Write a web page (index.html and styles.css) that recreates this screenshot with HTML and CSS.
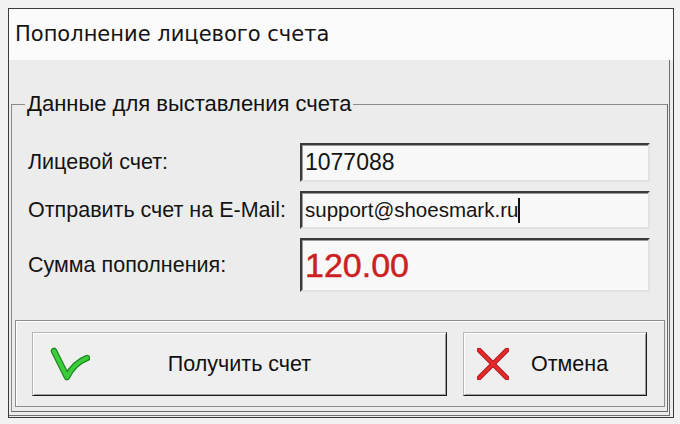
FILE: index.html
```html
<!DOCTYPE html>
<html lang="ru">
<head>
<meta charset="utf-8">
<link rel="stylesheet" href="styles.css">
</head>
<body>
<div class="window">
  <div class="titlebar">Пополнение лицевого счета</div>
  <div class="body">
    <fieldset class="group">
      <legend class="legend">Данные для выставления счета</legend>
      <div class="rows">
        <div class="row">
          <span class="label">Лицевой счет:</span>
          <div class="field f1"><span class="val num">1077088</span></div>
        </div>
        <div class="row">
          <span class="label">Отправить счет на E-Mail:</span>
          <div class="field f2"><span class="val">support@shoesmark.ru</span><span class="caret"></span></div>
        </div>
        <div class="row">
          <span class="label">Сумма пополнения:</span>
          <div class="field f3"><span class="sum">120.00</span></div>
        </div>
      </div>
      <div class="panel">
        <div class="btn btn-ok">
          <svg class="ico-check" width="40" height="34" viewBox="0 0 40 34">
            <path d="M4 4 L17 30 Q24 16 37 11" fill="none" stroke="#1e8a1e" stroke-width="6.5" stroke-linecap="round" stroke-linejoin="round"/>
            <path d="M4 4 L17 30 Q24 16 37 11" fill="none" stroke="#3ccc3c" stroke-width="4" stroke-linecap="round" stroke-linejoin="round"/>
          </svg>
          <span class="btn-text">Получить счет</span>
          <span></span>
        </div>
        <div class="btn btn-cancel">
          <svg class="ico-x" width="32" height="32" viewBox="0 0 32 32">
            <path d="M2 2 L30 30 M30 2 L2 30" fill="none" stroke="#b01818" stroke-width="5" stroke-linecap="round"/>
            <path d="M2 2 L30 30 M30 2 L2 30" fill="none" stroke="#e8282d" stroke-width="3" stroke-linecap="round"/>
          </svg>
          <span class="btn-text">Отмена</span>
        </div>
      </div>
    </fieldset>
  </div>
</div>
</body>
</html>
```

FILE: styles.css
```css
* { box-sizing: border-box; }
html, body { margin: 0; }
body {
  width: 680px;
  height: 424px;
  background: #f2f2f2;
  padding: 8px 6px 6px 8px;
  font-family: "Liberation Sans", Arial, sans-serif;
  color: #111;
  overflow: hidden;
}
.window {
  width: 666px;
  height: 410px;
  border: 1px solid #3c3c3c;
  background: #ececec;
  display: flex;
  flex-direction: column;
}
.titlebar {
  height: 51px;
  flex: none;
  background: #fbfbfb;
  font-family: "DejaVu Sans", sans-serif;
  font-size: 21px;
  line-height: 51px;
  padding-left: 6px;
  color: #141414;
}
.body {
  flex: 1;
  display: flex;
  padding: 32px 1px 0 2px;
  margin: 0 3px 3px 0;
  border-right: 1px solid #6e6e6e;
  border-bottom: 1px solid #6e6e6e;
}
.group {
  flex: 1;
  margin: 0 0 3px 0;
  padding: 0;
  border: 1px solid #8a8a8a;
  border-right-color: #6a6a6a;
  border-bottom-color: #6a6a6a;
  display: flex;
  flex-direction: column;
  min-width: 0;
}
.legend {
  margin-left: 13px;
  padding: 0 2px;
  font-size: 22px;
  line-height: 24px;
  color: #111;
}
.rows {
  display: flex;
  flex-direction: column;
  gap: 9px;
  padding: 27px 17px 0 16px;
}
.row {
  display: flex;
  align-items: center;
  justify-content: space-between;
}
.label {
  font-size: 21.5px;
  color: #141414;
}
.field {
  width: 350px;
  background: #f8f8f8;
  border: 2px solid;
  border-color: #3a3a3a #e2e2e2 #e2e2e2 #3a3a3a;
  box-shadow: inset 1px 1px 0 #9a9a9a;
  display: flex;
  align-items: center;
  padding-left: 3px;
}
.f1 { height: 39px; }
.f2 { height: 38px; }
.f3 { height: 54px; }
.val {
  font-size: 20.5px;
  color: #141414;
}
.num { font-size: 23px; }
.caret {
  display: inline-block;
  width: 2px;
  height: 25px;
  background: #111;
}
.sum {
  font-size: 34px;
  color: #cc1f23;
  -webkit-text-stroke: 0.5px #cc1f23;
}
.panel {
  margin: 28px 2px 4px 3px;
  flex: 1;
  border: 1px solid #8c8c8c;
  box-shadow: inset 1px 1px 0 #fff;
  background: #ededed;
  display: flex;
  gap: 16px;
  padding: 11px 16px 10px 16px;
}
.btn {
  height: 64px;
  background: #efefef;
  border: 1px solid;
  border-color: #b8b8b8 #1a1a1a #1a1a1a #b8b8b8;
  box-shadow: inset 1px 1px 0 #fff, inset -1px -1px 0 #a0a0a0;
  font-size: 21.5px;
  color: #111;
}
.btn-ok {
  width: 415px;
  display: grid;
  grid-template-columns: 1fr auto 1fr;
  align-items: center;
  padding: 0 17px;
}
.btn-cancel {
  width: 184px;
  display: flex;
  align-items: center;
  gap: 22px;
  padding-left: 13px;
}
.ico-check { justify-self: start; }
```
